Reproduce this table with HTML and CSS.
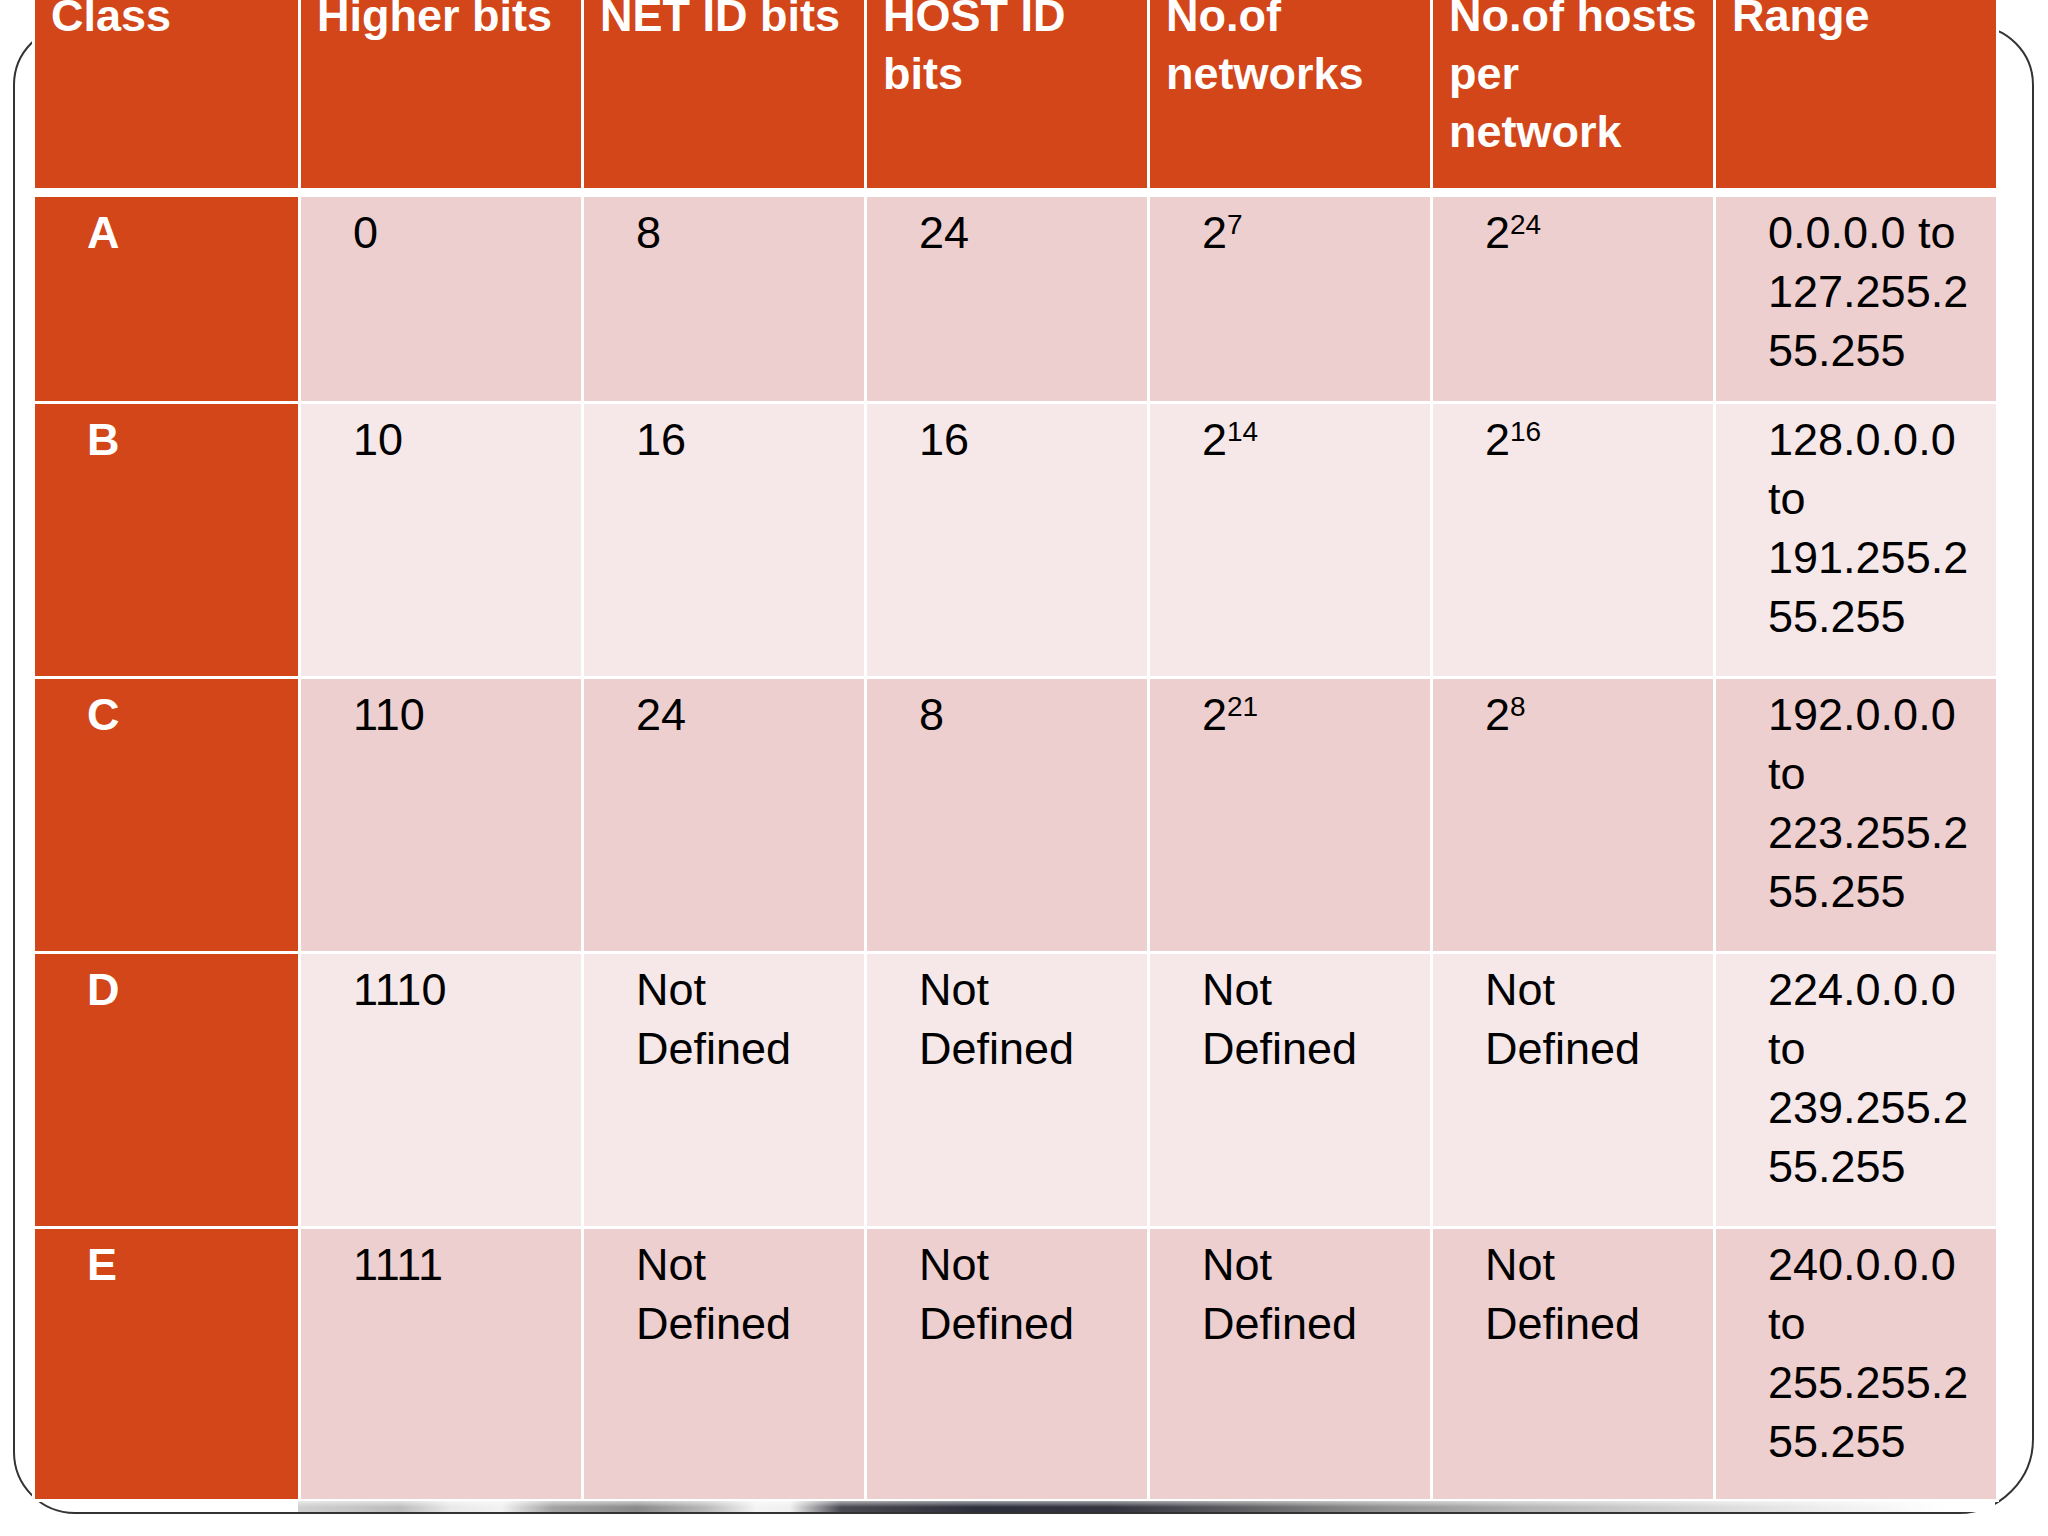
FILE: index.html
```html
<!DOCTYPE html>
<html lang="en">
<head>
<meta charset="utf-8">
<title>IP address classes</title>
<link rel="stylesheet" href="styles.css">
</head>
<body>
<div class="slide">
  <table class="ip-table">
    <thead>
      <tr class="head-row">
        <th class="col-class">Class</th>
        <th class="col-data">Higher bits</th>
        <th class="col-data">NET ID bits</th>
        <th class="col-data">HOST ID bits</th>
        <th class="col-data">No.of networks</th>
        <th class="col-data">No.of hosts per network</th>
        <th class="col-data">Range</th>
      </tr>
    </thead>
    <tbody>
      <tr class="row row-short shade-dark">
        <th class="cls">A</th>
        <td>0</td>
        <td>8</td>
        <td>24</td>
        <td>2<sup>7</sup></td>
        <td>2<sup>24</sup></td>
        <td>0.0.0.0 to 127.255.255.255</td>
      </tr>
      <tr class="row row-tall shade-light">
        <th class="cls">B</th>
        <td>10</td>
        <td>16</td>
        <td>16</td>
        <td>2<sup>14</sup></td>
        <td>2<sup>16</sup></td>
        <td>128.0.0.0 to 191.255.255.255</td>
      </tr>
      <tr class="row row-tall shade-dark">
        <th class="cls">C</th>
        <td>110</td>
        <td>24</td>
        <td>8</td>
        <td>2<sup>21</sup></td>
        <td>2<sup>8</sup></td>
        <td>192.0.0.0 to 223.255.255.255</td>
      </tr>
      <tr class="row row-tall shade-light">
        <th class="cls">D</th>
        <td>1110</td>
        <td>Not Defined</td>
        <td>Not Defined</td>
        <td>Not Defined</td>
        <td>Not Defined</td>
        <td>224.0.0.0 to 239.255.255.255</td>
      </tr>
      <tr class="row row-last shade-dark">
        <th class="cls">E</th>
        <td>1111</td>
        <td>Not Defined</td>
        <td>Not Defined</td>
        <td>Not Defined</td>
        <td>Not Defined</td>
        <td>240.0.0.0 to 255.255.255.255</td>
      </tr>
    </tbody>
  </table>
  <div class="scrub"></div>
</div>
</body>
</html>
```

FILE: styles.css
```css
html, body {
  margin: 0;
  padding: 0;
  background: #ffffff;
}

body {
  width: 2048px;
  height: 1536px;
  overflow: hidden;
  font-family: "Liberation Sans", Arial, sans-serif;
}

.slide {
  box-sizing: border-box;
  width: 2021px;
  margin: 25px 0 0 13px;
  border: 2px solid #333333;
  border-radius: 60px 60px 75px 62px;
  padding: 0 33px 0 17px;
}

.ip-table {
  table-layout: fixed;
  width: 1967px;
  margin-top: -51px;
  border-collapse: separate;
  border-spacing: 3px;
  background: #ffffff;
}

.ip-table th,
.ip-table td {
  box-sizing: border-box;
  vertical-align: top;
  text-align: left;
}

.col-class {
  width: 263px;
}

.col-data {
  width: 280px;
}

.head-row {
  height: 215px;
}

.head-row th {
  background: #d2461a;
  color: #ffffff;
  font-weight: bold;
  font-size: 45px;
  line-height: 58px;
  padding: 8px 13px 0 16px;
  border-bottom: 6px solid #ffffff;
}

.row td,
.row th.cls {
  font-size: 45px;
  line-height: 59px;
  padding: 6px 22px 0 52px;
  overflow-wrap: break-word;
}

.row td {
  color: #000000;
  font-weight: normal;
}

.row th.cls {
  background: #d2461a;
  color: #ffffff;
  font-weight: bold;
}

.row-short {
  height: 204px;
}

.row-tall {
  height: 272px;
}

.row-last {
  height: 270px;
}

.shade-dark td {
  background: #eecfcf;
}

.shade-light td {
  background: #f6e8e8;
}

sup {
  font-size: 28px;
  line-height: 0;
  vertical-align: 14px;
}

.scrub {
  height: 11px;
  margin: -1px 4px 0 266px;
  background:
    linear-gradient(to bottom, rgba(255, 255, 255, 0.55), rgba(255, 255, 255, 0) 55%),
    linear-gradient(to right,
      #cfcfcf 0%, #bdbdbd 6%, #e9e9e9 9%, #f2f2f2 12%,
      #a3a3a3 15%, #8a8a8a 20%, #b9b9b9 24%, #f4f4f4 27%,
      #f0f0f0 29%, #4a4a52 32%, #2e2f3c 40%, #33343f 48%,
      #5c5c60 55%, #8d8d8d 63%, #b5b5b5 72%, #d6d6d6 82%,
      #eeeeee 90%, #ffffff 97%);
}
```
